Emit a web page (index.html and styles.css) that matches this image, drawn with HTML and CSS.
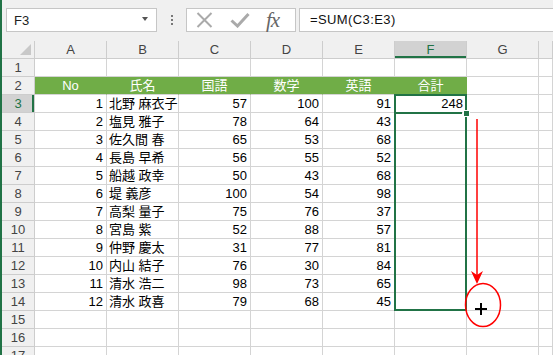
FILE: index.html
```html
<!DOCTYPE html>
<html lang="ja">
<head>
    <meta charset="UTF-8">
    <title>SUM - Fill</title>
    <link rel="stylesheet" href="styles.css">
</head>
<body>

<div class="app">
    <div class="toolbar">
        <div class="namebox"><span>F3</span><span class="caret"></span></div>
        <div class="grip"><i></i><i></i><i></i></div>
        <div class="fbtns">
            <svg class="ico-x" width="17" height="16" viewBox="0 0 17 16">
                <path d="M1.5 1 L15.5 15 M15.5 1 L1.5 15" stroke="#aaa" stroke-width="2" fill="none"/>
            </svg>
            <svg class="ico-ok" width="20" height="16" viewBox="0 0 20 16">
                <path d="M1.5 8.5 L7.5 14 L18.5 2" stroke="#aaa" stroke-width="3" fill="none"/>
            </svg>
            <span class="fx">fx</span>
        </div>
        <div class="formula">=SUM(C3:E3)</div>
    </div>

    <div class="sheet">
        <div class="row colhead">
            <div class="corner"></div><div>A</div><div>B</div><div>C</div><div>D</div><div>E</div><div class="cur">F</div><div>G</div><div></div>
        </div>
        <div class="row">
            <div class="rh">1</div><div></div><div></div><div></div><div></div><div></div><div></div><div></div><div></div>
        </div>
        <div class="row hd">
            <div class="rh">2</div><div>No</div><div>氏名</div><div>国語</div><div>数学</div><div>英語</div><div>合計</div><div></div><div></div>
        </div>
        <div class="row">
            <div class="rh cur">3</div><div class="n">1</div><div class="t">北野 麻衣子</div><div class="n">57</div><div class="n">100</div><div class="n">91</div><div class="n">248</div><div></div><div></div>
        </div>
        <div class="row">
            <div class="rh">4</div><div class="n">2</div><div class="t">塩見 雅子</div><div class="n">78</div><div class="n">64</div><div class="n">43</div><div></div><div></div><div></div>
        </div>
        <div class="row">
            <div class="rh">5</div><div class="n">3</div><div class="t">佐久間 春</div><div class="n">65</div><div class="n">53</div><div class="n">68</div><div></div><div></div><div></div>
        </div>
        <div class="row">
            <div class="rh">6</div><div class="n">4</div><div class="t">長島 早希</div><div class="n">56</div><div class="n">55</div><div class="n">52</div><div></div><div></div><div></div>
        </div>
        <div class="row">
            <div class="rh">7</div><div class="n">5</div><div class="t">船越 政幸</div><div class="n">50</div><div class="n">43</div><div class="n">68</div><div></div><div></div><div></div>
        </div>
        <div class="row">
            <div class="rh">8</div><div class="n">6</div><div class="t">堤 義彦</div><div class="n">100</div><div class="n">54</div><div class="n">98</div><div></div><div></div><div></div>
        </div>
        <div class="row">
            <div class="rh">9</div><div class="n">7</div><div class="t">高梨 量子</div><div class="n">75</div><div class="n">76</div><div class="n">37</div><div></div><div></div><div></div>
        </div>
        <div class="row">
            <div class="rh">10</div><div class="n">8</div><div class="t">宮島 紫</div><div class="n">52</div><div class="n">88</div><div class="n">57</div><div></div><div></div><div></div>
        </div>
        <div class="row">
            <div class="rh">11</div><div class="n">9</div><div class="t">仲野 慶太</div><div class="n">31</div><div class="n">77</div><div class="n">81</div><div></div><div></div><div></div>
        </div>
        <div class="row">
            <div class="rh">12</div><div class="n">10</div><div class="t">内山 結子</div><div class="n">76</div><div class="n">30</div><div class="n">84</div><div></div><div></div><div></div>
        </div>
        <div class="row">
            <div class="rh">13</div><div class="n">11</div><div class="t">清水 浩二</div><div class="n">98</div><div class="n">73</div><div class="n">65</div><div></div><div></div><div></div>
        </div>
        <div class="row">
            <div class="rh">14</div><div class="n">12</div><div class="t">清水 政喜</div><div class="n">79</div><div class="n">68</div><div class="n">45</div><div></div><div></div><div></div>
        </div>
        <div class="row">
            <div class="rh">15</div><div></div><div></div><div></div><div></div><div></div><div></div><div></div><div></div>
        </div>
        <div class="row">
            <div class="rh">16</div><div></div><div></div><div></div><div></div><div></div><div></div><div></div><div></div>
        </div>
        <div class="row">
            <div class="rh">17</div><div></div><div></div><div></div><div></div><div></div><div></div><div></div><div></div>
        </div>
    </div>
</div>

<!-- selection F3:F14 and fill handle -->
<div class="range"></div>
<div class="active-line"></div>
<div class="handle"></div>

<!-- drag annotation -->
<svg class="marks" width="553" height="355" viewBox="0 0 553 355">
    <line x1="477" y1="119" x2="477" y2="276" stroke="#f00" stroke-width="1.5"/>
    <path d="M471 271 L477 284 L483 271 L477 275 Z" fill="#f00"/>
    <ellipse cx="483" cy="305" rx="17.5" ry="21.5" fill="none" stroke="#f00" stroke-width="1.5"/>
    <path d="M475 309 H487 M481 303 V315" stroke="#000" stroke-width="2"/>
</svg>

</body>
</html>
```

FILE: styles.css
```css
html, body {
    margin: 0;
    background: #fff;
}

body {
    position: relative;
    width: 553px;
    height: 355px;
    overflow: hidden;
    font-family: "Liberation Sans", "Noto Sans CJK JP", sans-serif;
    font-size: 13px;
    color: #000;
}

.app {
    border-left: 2px solid #217346;
    height: 355px;
}

/* Formula bar */
.toolbar {
    height: 41px;
    background: #f0f0f0;
    display: flex;
    align-items: flex-start;
    padding: 8px 0 0 4px;
    box-sizing: border-box;
}

.namebox {
    width: 151px;
    height: 24px;
    box-sizing: border-box;
    border: 1px solid #c6c6c6;
    background: #fff;
    display: flex;
    align-items: center;
    justify-content: space-between;
    padding: 0 8px 0 7px;
    margin-right: 14px;
    font-size: 13px;
    color: #222;
}

.caret {
    width: 0;
    height: 0;
    border-left: 3px solid transparent;
    border-right: 3px solid transparent;
    border-top: 4px solid #555;
    margin-top: -2px;
}

.grip {
    display: flex;
    flex-direction: column;
    gap: 2px;
    padding-top: 7px;
    margin-right: 13px;
}

.grip i {
    display: block;
    width: 2px;
    height: 2px;
    background: #777;
}

.fbtns {
    width: 110px;
    height: 24px;
    box-sizing: border-box;
    border: 1px solid #c6c6c6;
    background: #fff;
    display: flex;
    align-items: center;
    margin-right: 3px;
}

.ico-x {
    margin-left: 9px;
}

.ico-ok {
    margin-left: 17px;
}

.fx {
    margin-left: 16px;
    font-family: "Liberation Serif", serif;
    font-style: italic;
    font-size: 21px;
    line-height: 22px;
    color: #666;
    letter-spacing: -1px;
}

.formula {
    flex: 1;
    margin-right: -6px;
    height: 24px;
    box-sizing: border-box;
    border: 1px solid #c6c6c6;
    background: #fff;
    padding-left: 10px;
    line-height: 22px;
    font-size: 13px;
    letter-spacing: 0.4px;
    color: #111;
}

/* Sheet grid */
.row {
    display: grid;
    grid-template-columns: 33px repeat(7, 72px) 1fr;
    height: 18px;
}

.row > div {
    box-sizing: border-box;
    border-right: 1px solid #d4d4d4;
    border-bottom: 1px solid #d4d4d4;
    line-height: 17px;
    white-space: nowrap;
    overflow: hidden;
}

.colhead > div,
.row > .rh {
    background: #f0f0f0;
    border-color: #cdcdcd;
    text-align: center;
    color: #444;
}

.colhead > .cur {
    background: #d2d2d2;
    color: #217346;
    box-shadow: inset 0 -2px #217346;
}

.row > .rh.cur {
    background: #d2d2d2;
    color: #217346;
    box-shadow: inset -2px 0 #217346;
}

.corner {
    position: relative;
}

.corner::after {
    content: "";
    position: absolute;
    right: 3px;
    bottom: 3px;
    border-left: 11px solid transparent;
    border-bottom: 11px solid #c8c8c8;
}

.hd > div:nth-child(n+2):nth-child(-n+7) {
    background: #70ad47;
    border-right-color: #70ad47;
    color: #fff;
    text-align: center;
}

.n {
    text-align: right;
    padding-right: 3px;
}

.t {
    padding-left: 2px;
}

/* Selection */
.range {
    position: absolute;
    left: 394px;
    top: 94px;
    width: 73px;
    height: 217px;
    box-sizing: border-box;
    border: 2px solid #217346;
}

.active-line {
    position: absolute;
    left: 396px;
    top: 112px;
    width: 66px;
    height: 2px;
    background: #217346;
}

.handle {
    position: absolute;
    left: 464px;
    top: 111px;
    width: 5px;
    height: 5px;
    background: #217346;
    box-shadow: 0 0 0 1px #fff;
}

.marks {
    position: absolute;
    left: 0;
    top: 0;
    pointer-events: none;
}
```
